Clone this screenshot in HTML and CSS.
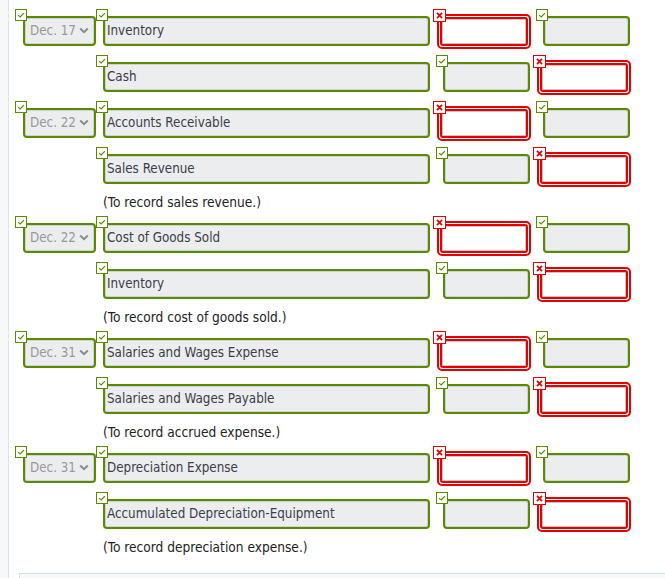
FILE: index.html
```html
<!DOCTYPE html>
<html>
<head>
<meta charset="utf-8">
<link rel="stylesheet" href="styles.css">
</head>
<body>
<div class="page">
  <div class="entries">

    <div class="entry">
      <div class="row">
        <div class="cell date"><div class="field ok select"><span class="badge ok"><svg viewBox="0 0 12 12"><path d="M2.5 6.2 L5 8.4 L9.5 3.8"/></svg></span><span class="sel-text">Dec. 17</span><svg class="chev" viewBox="0 0 10 7"><path d="M1.2 1.5 L5 5.2 L8.8 1.5"/></svg></div></div>
        <div class="cell account"><div class="field ok"><span class="badge ok"><svg viewBox="0 0 12 12"><path d="M2.5 6.2 L5 8.4 L9.5 3.8"/></svg></span>Inventory</div></div>
        <div class="cell amt"><div class="field bad"><span class="badge bad"><svg viewBox="0 0 13 13"><path d="M3.5 3.5 L9.5 9.5 M9.5 3.5 L3.5 9.5"/></svg></span><div class="inner"></div></div></div>
        <div class="cell amt"><div class="field ok num"><span class="badge ok"><svg viewBox="0 0 12 12"><path d="M2.5 6.2 L5 8.4 L9.5 3.8"/></svg></span></div></div>
      </div>
      <div class="row">
        <div class="cell date"></div>
        <div class="cell account"><div class="field ok"><span class="badge ok"><svg viewBox="0 0 12 12"><path d="M2.5 6.2 L5 8.4 L9.5 3.8"/></svg></span>Cash</div></div>
        <div class="cell amt"><div class="field ok num"><span class="badge ok"><svg viewBox="0 0 12 12"><path d="M2.5 6.2 L5 8.4 L9.5 3.8"/></svg></span></div></div>
        <div class="cell amt"><div class="field bad"><span class="badge bad"><svg viewBox="0 0 13 13"><path d="M3.5 3.5 L9.5 9.5 M9.5 3.5 L3.5 9.5"/></svg></span><div class="inner"></div></div></div>
      </div>
    </div>

    <div class="entry">
      <div class="row">
        <div class="cell date"><div class="field ok select"><span class="badge ok"><svg viewBox="0 0 12 12"><path d="M2.5 6.2 L5 8.4 L9.5 3.8"/></svg></span><span class="sel-text">Dec. 22</span><svg class="chev" viewBox="0 0 10 7"><path d="M1.2 1.5 L5 5.2 L8.8 1.5"/></svg></div></div>
        <div class="cell account"><div class="field ok"><span class="badge ok"><svg viewBox="0 0 12 12"><path d="M2.5 6.2 L5 8.4 L9.5 3.8"/></svg></span>Accounts Receivable</div></div>
        <div class="cell amt"><div class="field bad"><span class="badge bad"><svg viewBox="0 0 13 13"><path d="M3.5 3.5 L9.5 9.5 M9.5 3.5 L3.5 9.5"/></svg></span><div class="inner"></div></div></div>
        <div class="cell amt"><div class="field ok num"><span class="badge ok"><svg viewBox="0 0 12 12"><path d="M2.5 6.2 L5 8.4 L9.5 3.8"/></svg></span></div></div>
      </div>
      <div class="row">
        <div class="cell date"></div>
        <div class="cell account"><div class="field ok"><span class="badge ok"><svg viewBox="0 0 12 12"><path d="M2.5 6.2 L5 8.4 L9.5 3.8"/></svg></span>Sales Revenue</div></div>
        <div class="cell amt"><div class="field ok num"><span class="badge ok"><svg viewBox="0 0 12 12"><path d="M2.5 6.2 L5 8.4 L9.5 3.8"/></svg></span></div></div>
        <div class="cell amt"><div class="field bad"><span class="badge bad"><svg viewBox="0 0 13 13"><path d="M3.5 3.5 L9.5 9.5 M9.5 3.5 L3.5 9.5"/></svg></span><div class="inner"></div></div></div>
      </div>
      <div class="note">(To record sales revenue.)</div>
    </div>

    <div class="entry">
      <div class="row">
        <div class="cell date"><div class="field ok select"><span class="badge ok"><svg viewBox="0 0 12 12"><path d="M2.5 6.2 L5 8.4 L9.5 3.8"/></svg></span><span class="sel-text">Dec. 22</span><svg class="chev" viewBox="0 0 10 7"><path d="M1.2 1.5 L5 5.2 L8.8 1.5"/></svg></div></div>
        <div class="cell account"><div class="field ok"><span class="badge ok"><svg viewBox="0 0 12 12"><path d="M2.5 6.2 L5 8.4 L9.5 3.8"/></svg></span>Cost of Goods Sold</div></div>
        <div class="cell amt"><div class="field bad"><span class="badge bad"><svg viewBox="0 0 13 13"><path d="M3.5 3.5 L9.5 9.5 M9.5 3.5 L3.5 9.5"/></svg></span><div class="inner"></div></div></div>
        <div class="cell amt"><div class="field ok num"><span class="badge ok"><svg viewBox="0 0 12 12"><path d="M2.5 6.2 L5 8.4 L9.5 3.8"/></svg></span></div></div>
      </div>
      <div class="row">
        <div class="cell date"></div>
        <div class="cell account"><div class="field ok"><span class="badge ok"><svg viewBox="0 0 12 12"><path d="M2.5 6.2 L5 8.4 L9.5 3.8"/></svg></span>Inventory</div></div>
        <div class="cell amt"><div class="field ok num"><span class="badge ok"><svg viewBox="0 0 12 12"><path d="M2.5 6.2 L5 8.4 L9.5 3.8"/></svg></span></div></div>
        <div class="cell amt"><div class="field bad"><span class="badge bad"><svg viewBox="0 0 13 13"><path d="M3.5 3.5 L9.5 9.5 M9.5 3.5 L3.5 9.5"/></svg></span><div class="inner"></div></div></div>
      </div>
      <div class="note">(To record cost of goods sold.)</div>
    </div>

    <div class="entry">
      <div class="row">
        <div class="cell date"><div class="field ok select"><span class="badge ok"><svg viewBox="0 0 12 12"><path d="M2.5 6.2 L5 8.4 L9.5 3.8"/></svg></span><span class="sel-text">Dec. 31</span><svg class="chev" viewBox="0 0 10 7"><path d="M1.2 1.5 L5 5.2 L8.8 1.5"/></svg></div></div>
        <div class="cell account"><div class="field ok"><span class="badge ok"><svg viewBox="0 0 12 12"><path d="M2.5 6.2 L5 8.4 L9.5 3.8"/></svg></span>Salaries and Wages Expense</div></div>
        <div class="cell amt"><div class="field bad"><span class="badge bad"><svg viewBox="0 0 13 13"><path d="M3.5 3.5 L9.5 9.5 M9.5 3.5 L3.5 9.5"/></svg></span><div class="inner"></div></div></div>
        <div class="cell amt"><div class="field ok num"><span class="badge ok"><svg viewBox="0 0 12 12"><path d="M2.5 6.2 L5 8.4 L9.5 3.8"/></svg></span></div></div>
      </div>
      <div class="row">
        <div class="cell date"></div>
        <div class="cell account"><div class="field ok"><span class="badge ok"><svg viewBox="0 0 12 12"><path d="M2.5 6.2 L5 8.4 L9.5 3.8"/></svg></span>Salaries and Wages Payable</div></div>
        <div class="cell amt"><div class="field ok num"><span class="badge ok"><svg viewBox="0 0 12 12"><path d="M2.5 6.2 L5 8.4 L9.5 3.8"/></svg></span></div></div>
        <div class="cell amt"><div class="field bad"><span class="badge bad"><svg viewBox="0 0 13 13"><path d="M3.5 3.5 L9.5 9.5 M9.5 3.5 L3.5 9.5"/></svg></span><div class="inner"></div></div></div>
      </div>
      <div class="note">(To record accrued expense.)</div>
    </div>

    <div class="entry">
      <div class="row">
        <div class="cell date"><div class="field ok select"><span class="badge ok"><svg viewBox="0 0 12 12"><path d="M2.5 6.2 L5 8.4 L9.5 3.8"/></svg></span><span class="sel-text">Dec. 31</span><svg class="chev" viewBox="0 0 10 7"><path d="M1.2 1.5 L5 5.2 L8.8 1.5"/></svg></div></div>
        <div class="cell account"><div class="field ok"><span class="badge ok"><svg viewBox="0 0 12 12"><path d="M2.5 6.2 L5 8.4 L9.5 3.8"/></svg></span>Depreciation Expense</div></div>
        <div class="cell amt"><div class="field bad"><span class="badge bad"><svg viewBox="0 0 13 13"><path d="M3.5 3.5 L9.5 9.5 M9.5 3.5 L3.5 9.5"/></svg></span><div class="inner"></div></div></div>
        <div class="cell amt"><div class="field ok num"><span class="badge ok"><svg viewBox="0 0 12 12"><path d="M2.5 6.2 L5 8.4 L9.5 3.8"/></svg></span></div></div>
      </div>
      <div class="row">
        <div class="cell date"></div>
        <div class="cell account"><div class="field ok"><span class="badge ok"><svg viewBox="0 0 12 12"><path d="M2.5 6.2 L5 8.4 L9.5 3.8"/></svg></span>Accumulated Depreciation-Equipment</div></div>
        <div class="cell amt"><div class="field ok num"><span class="badge ok"><svg viewBox="0 0 12 12"><path d="M2.5 6.2 L5 8.4 L9.5 3.8"/></svg></span></div></div>
        <div class="cell amt"><div class="field bad"><span class="badge bad"><svg viewBox="0 0 13 13"><path d="M3.5 3.5 L9.5 9.5 M9.5 3.5 L3.5 9.5"/></svg></span><div class="inner"></div></div></div>
      </div>
      <div class="note">(To record depreciation expense.)</div>
    </div>

  </div>
  <div class="footer-box"></div>
</div>
</body>
</html>
```

FILE: styles.css
```css
* { box-sizing: border-box; }

html, body {
  margin: 0;
  padding: 0;
  height: 100%;
  overflow: hidden;
}

body {
  background: #f7f8fa;
  font-family: "DejaVu Sans Condensed", "DejaVu Sans", sans-serif;
  font-size: 13.3px;
  color: #222;
}

.page {
  margin-left: 8px;
  border-left: 1px solid #dfe4ea;
  background: #ffffff;
  min-height: 100%;
  padding-top: 16px;
}

.entries {
  padding-left: 14px;
}

.entry + .entry { margin-top: 16px; }

.row {
  display: flex;
  align-items: flex-start;
  height: 30px;
}

.row + .row { margin-top: 16px; }

.cell { flex: none; }
.cell.date { width: 73px; margin-right: 7px; }
.cell.account { width: 327px; margin-right: 7px; }
.cell.amt { width: 94px; }
.cell.amt + .cell.amt { margin-left: 6px; }

.field {
  position: relative;
  height: 30px;
}

.field.ok {
  border: 2px solid #5a8a00;
  border-radius: 4px;
  background: #ebedef;
  box-shadow: inset 0 0 0 1px #cfd2d5;
  color: #3d3d48;
  display: flex;
  align-items: center;
  padding-left: 2px;
  padding-bottom: 1px;
  white-space: nowrap;
}

.field.ok.num {
  width: 87px;
  margin-left: 6px;
}

.field.select {
  padding-left: 5px;
  color: #999;
}

.sel-text { flex: 1; }

.chev {
  width: 10px;
  height: 7px;
  margin-right: 5px;
  fill: none;
  stroke: #8a8a8a;
  stroke-width: 2;
}

.field.bad {
  height: 35px;
  margin-top: -2px;
  border: 2px solid #e30000;
  border-radius: 5px;
  padding: 1px;
  background: #fff;
}

.field.bad .inner {
  height: 100%;
  border: 2px solid #e30000;
  border-radius: 3px;
  background: #fff;
  box-shadow: inset 0 0 0 1px #c6c6c6;
}

.badge {
  position: absolute;
  background: #fff;
  display: block;
  z-index: 2;
}

.badge svg { display: block; width: 100%; height: 100%; fill: none; }

.badge.ok {
  width: 12px;
  height: 12px;
  left: -9px;
  top: -9px;
  border: 1px solid #5a8a00;
}

.badge.ok svg path { stroke: #5a8a00; stroke-width: 1.4; }

.field.select .badge.ok { left: -10px; }

.badge.bad {
  width: 13px;
  height: 13px;
  left: -6px;
  top: -7px;
  border: 1px solid #e30000;
}

.badge.bad svg path { stroke: #e30000; stroke-width: 2; }

.note {
  margin: 10px 0 -3px 80px;
  line-height: 16px;
  height: 16px;
  font-size: 13.6px;
  color: #222;
}

.footer-box {
  margin: 21px 0 0 10px;
  height: 40px;
  border: 1px solid #d6dde5;
  border-right: none;
  background: #f6f8fa;
}
```
